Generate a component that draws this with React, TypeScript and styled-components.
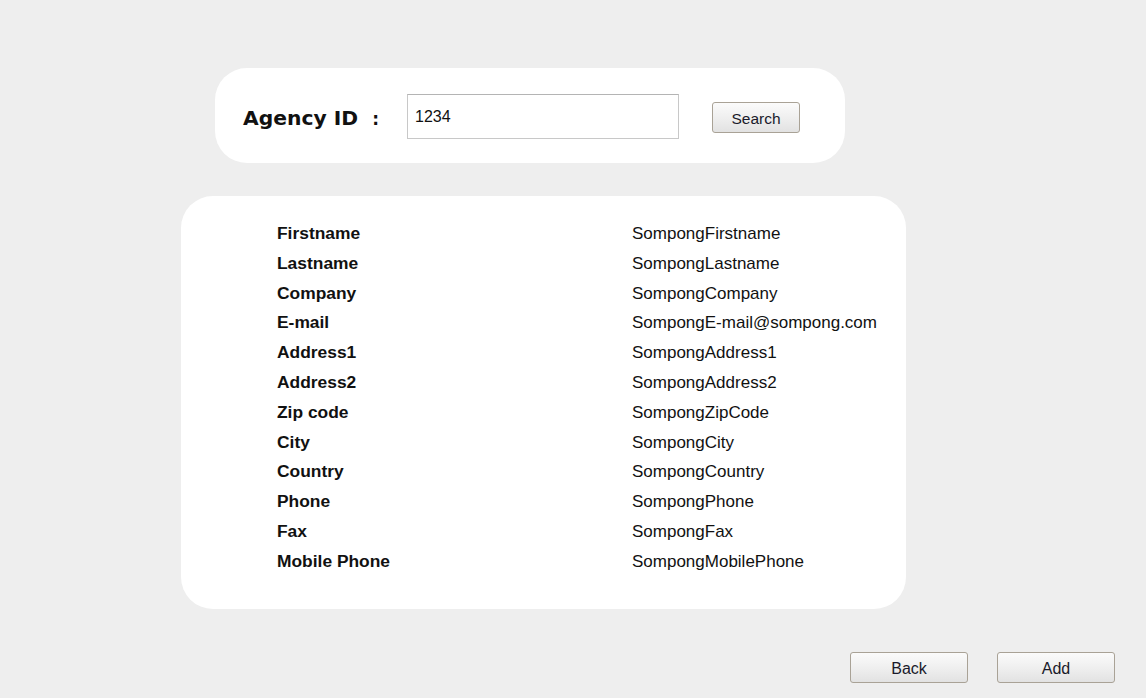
import React from 'react';
import styled, { createGlobalStyle } from 'styled-components';

const GlobalStyle = createGlobalStyle`
	body {
		margin: 0;
		background: #eeeeee;
		font-family: "Liberation Sans", Arial, sans-serif;
	}
`;

const Page = styled.div`
	width: 1146px;
	height: 698px;
	padding-top: 68px;
	box-sizing: border-box;
	display: flex;
	flex-direction: column;
	overflow: hidden;
`;

const SearchCard = styled.div`
	margin-left: 215px;
	width: 630px;
	height: 95px;
	box-sizing: border-box;
	padding: 4px 0 0 28px;
	background: #fff;
	border-radius: 32px;
	display: flex;
	align-items: center;
`;

const AgencyLabel = styled.div`
	font-family: "DejaVu Sans", Verdana, sans-serif;
	font-weight: bold;
	font-size: 20.3px;
	color: #111;
	width: 136px;
	display: flex;
	justify-content: space-between;
	margin-right: 28px;
	span:last-child {
		font-size: 17px;
		padding-top: 3px;
	}
`;

const Input = styled.input`
	width: 272px;
	height: 45px;
	box-sizing: border-box;
	border: 1px solid #c8c8c8;
	border-top-color: #b4b4b4;
	padding: 0 7px;
	font-family: "Liberation Sans", Arial, sans-serif;
	font-size: 16px;
	color: #111;
	outline: none;
	margin-top: -2px;
`;

const Button = styled.button<{ $width: number }>`
	width: ${p => p.$width}px;
	height: 31px;
	box-sizing: border-box;
	border: 1px solid #a9a296;
	border-radius: 3px;
	background: linear-gradient(180deg, #fbfbfb 0%, #eeeeee 55%, #e2e2e2 100%);
	font-family: "Liberation Sans", Arial, sans-serif;
	font-size: 16px;
	color: #1a1a2a;
	padding: 2px 0 0;
	cursor: pointer;
`;

const SearchButton = styled(Button)`
	margin-left: 33px;
	font-size: 15.5px;
`;

const InfoCard = styled.div`
	margin: 33px 0 0 181px;
	width: 725px;
	height: 413px;
	box-sizing: border-box;
	padding: 23px 0 0 96px;
	background: #fff;
	border-radius: 32px;
	display: grid;
	grid-template-columns: 355px 1fr;
	grid-auto-rows: 29.8px;
	align-content: start;
	font-size: 17px;
	color: #111;
`;

const Label = styled.div`
	font-weight: bold;
	font-size: 17.4px;
	line-height: 29.8px;
`;

const Value = styled.div`
	line-height: 29.8px;
`;

const Actions = styled.div`
	margin-top: 43px;
	display: flex;
	justify-content: flex-end;
	gap: 29px;
	padding-right: 31px;
`;

const fields: [string, string][] = [
	['Firstname', 'SompongFirstname'],
	['Lastname', 'SompongLastname'],
	['Company', 'SompongCompany'],
	['E-mail', 'SompongE-mail@sompong.com'],
	['Address1', 'SompongAddress1'],
	['Address2', 'SompongAddress2'],
	['Zip code', 'SompongZipCode'],
	['City', 'SompongCity'],
	['Country', 'SompongCountry'],
	['Phone', 'SompongPhone'],
	['Fax', 'SompongFax'],
	['Mobile Phone', 'SompongMobilePhone'],
];

const App = () => {
	return (
		<>
			<GlobalStyle />
			<Page>
				<SearchCard>
					<AgencyLabel>
						<span>Agency ID</span>
						<span>:</span>
					</AgencyLabel>
					<Input defaultValue="1234" />
					<SearchButton $width={88}>Search</SearchButton>
				</SearchCard>
				<InfoCard>
					{fields.map(([label, value]) => (
						<React.Fragment key={label}>
							<Label>{label}</Label>
							<Value>{value}</Value>
						</React.Fragment>
					))}
				</InfoCard>
				<Actions>
					<Button $width={118}>Back</Button>
					<Button $width={118}>Add</Button>
				</Actions>
			</Page>
		</>
	);
};

export default App;
